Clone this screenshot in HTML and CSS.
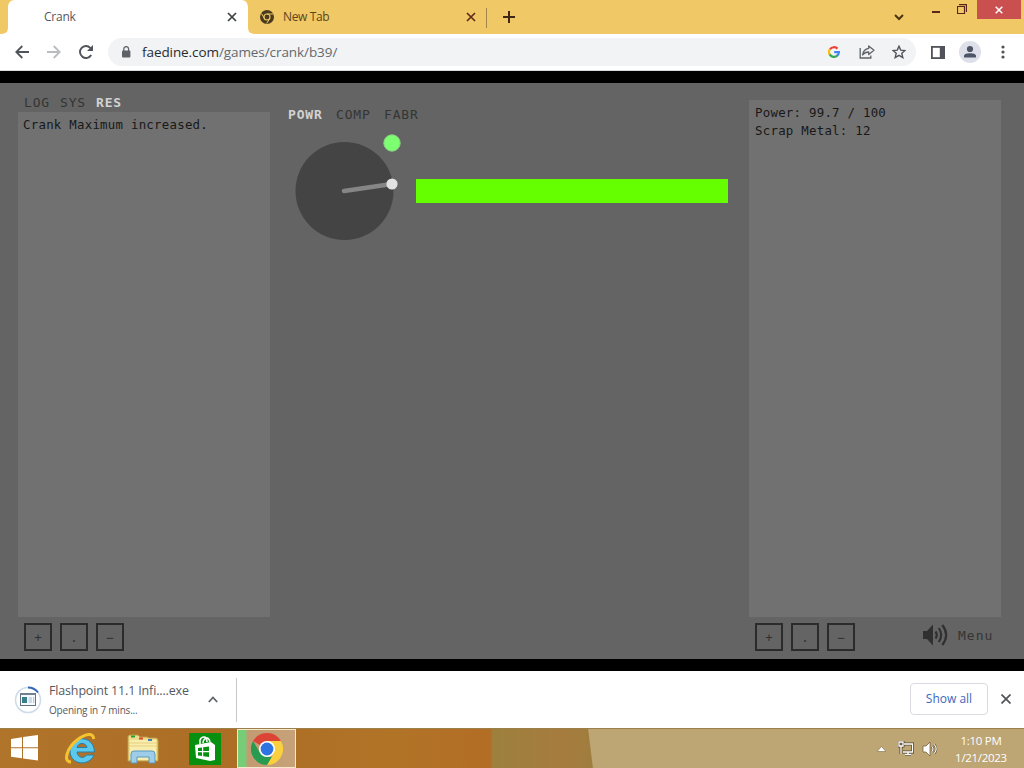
FILE: index.html
```
<!DOCTYPE html>
<html lang="en">
<head>
    <meta charset="utf-8">
    <title>Crank</title>
    <link rel="stylesheet" href="styles.css">
</head>
<body>
    <!-- tab strip -->
    <div class="tab-strip">
        <svg class="tab-shape" width="256" height="34" viewBox="0 0 256 34"><path d="M0 34C6 34 8 32 8 27V8C8 3 10 0 15 0H241C246 0 248 3 248 8V27C248 32 250 34 256 34Z" fill="#fff"/></svg>
        <div class="tab tab-active">
            <span class="tab-title">Crank</span>
            <svg width="10" height="10" viewBox="0 0 10 10"><path d="M1 1L9 9M9 1L1 9" stroke="#3c4043" stroke-width="1.7"/></svg>
        </div>
        <div class="tab tab-second">
            <svg width="14" height="14" viewBox="0 0 14 14"><circle cx="7" cy="7" r="7" fill="#4a3b1e"/><circle cx="7" cy="7" r="3" fill="none" stroke="#f0c966" stroke-width="1.1"/><path d="M7 4H13M4.4 8.5L1.5 3.5M9.6 8.5L6.7 13.5" stroke="#f0c966"/></svg>
            <span class="tab-title">New Tab</span>
            <svg width="10" height="10" viewBox="0 0 10 10"><path d="M1 1L9 9M9 1L1 9" stroke="#5f2d1a" stroke-width="1.7"/></svg>
        </div>
        <div class="tab-divider"></div>
        <svg class="new-tab" width="12" height="12" viewBox="0 0 12 12"><path d="M6 0V12M0 6H12" stroke="#3d2815" stroke-width="2"/></svg>
        <div class="window-buttons">
            <svg class="tab-search" width="10" height="7" viewBox="0 0 10 7"><path d="M1 1L5 5L9 1" fill="none" stroke="#4b3412" stroke-width="2"/></svg>
            <svg class="minimize" width="8" height="2"><rect width="8" height="2" fill="#5b2419"/></svg>
            <svg class="restore" width="10" height="10" viewBox="0 0 10 10"><path d="M.5 2.5H7.5V9.5H.5ZM2 .7H9.5V8" fill="none" stroke="#5b2419" stroke-width="1.2"/></svg>
            <div class="close-button">
                <svg width="8" height="8" viewBox="0 0 8 8"><path d="M.7 .7L7.3 7.3M7.3 .7L.7 7.3" stroke="#fff" stroke-width="1.5"/></svg>
            </div>
        </div>
    </div>

    <!-- toolbar -->
    <div class="toolbar">
        <svg class="nav-icon" width="14" height="14" viewBox="0 0 14 14"><path d="M14 7H1.5M7.3 1L1.3 7L7.3 13" fill="none" stroke="#50545a" stroke-width="1.8"/></svg>
        <svg class="nav-icon" width="14" height="14" viewBox="0 0 14 14"><path d="M0 7H12.5M6.7 1L12.7 7L6.7 13" fill="none" stroke="#babcbe" stroke-width="1.8"/></svg>
        <svg class="nav-icon" width="14" height="14" viewBox="0 0 14 14"><path d="M12.2 10A6 6 0 1 1 11.3 2.8L13 4.5" fill="none" stroke="#50545a" stroke-width="1.9"/><path d="M14 0V6H8Z" fill="#50545a"/></svg>
        <div class="address-bar">
            <svg width="10" height="12" viewBox="0 0 10 12"><rect x="1" y="4.4" width="8.4" height="7.2" rx="1" fill="#5f6368"/><path d="M2.8 5V3A2.4 2.4 0 0 1 7.6 3V5" fill="none" stroke="#5f6368" stroke-width="1.3"/></svg>
            <div class="url"><span class="host">faedine.com</span>/games/crank/b39/</div>
            <svg class="google" width="12" height="12" viewBox="0 0 12 12" fill="none" stroke-width="2.2"><path d="M2 3.4A4.9 4.9 0 0 1 9.5 2.6" stroke="#ea4335"/><path d="M1.8 8.7A4.9 4.9 0 0 1 1.8 3.4" stroke="#fbbc05"/><path d="M9.2 9.7A4.9 4.9 0 0 1 1.7 8.4" stroke="#34a853"/><path d="M6.2 6.2H10.9A4.9 4.9 0 0 1 9 9.8" stroke="#4285f4"/></svg>
            <svg class="share" width="16" height="14" viewBox="0 0 16 14" fill="none" stroke="#5f6368" stroke-width="1.3"><path d="M1.2 3V13H11.8V10.5"/><path d="M9.7 1L15 5.3L9.7 9.5V7C6.6 7 5 8 3.6 10C4 6.5 6 4 9.7 3.4Z" stroke-linejoin="round"/></svg>
            <svg class="star" width="14" height="14" viewBox="0 0 14 14"><path d="M7 1.2L8.7 5.1L13 5.5L9.8 8.3L10.8 12.6L7 10.3L3.2 12.6L4.2 8.3L1 5.5L5.3 5.1Z" fill="none" stroke="#50545a" stroke-width="1.4"/></svg>
        </div>
        <svg class="side-panel" width="14" height="13" viewBox="0 0 14 13"><rect x=".9" y=".9" width="12.2" height="11.2" fill="#fff" stroke="#50545a" stroke-width="1.8"/><rect x="8.8" y="1" width="4.5" height="11" fill="#50545a"/></svg>
        <svg class="avatar" width="22" height="22" viewBox="0 0 22 22"><circle cx="11" cy="11" r="11" fill="#dde0e9"/><circle cx="11" cy="8" r="3.1" fill="#4d5567"/><path d="M5 16.5V15C5 12.8 8 12.2 11 12.2S17 12.8 17 15V16.5Z" fill="#4d5567"/></svg>
        <svg class="kebab" width="4" height="14" viewBox="0 0 4 14" fill="#50545a"><circle cx="2" cy="2" r="1.6"/><circle cx="2" cy="7" r="1.6"/><circle cx="2" cy="12" r="1.6"/></svg>
    </div>

    <!-- game -->
    <div class="game">
        <div class="column">
            <div class="tabs left-tabs"><span>LOG</span><span>SYS</span><span class="selected">RES</span></div>
            <div class="panel log">Crank Maximum increased.</div>
            <div class="controls">
                <div class="control">+</div><div class="control">.</div><div class="control">−</div>
            </div>
        </div>
        <div class="main">
            <div class="tabs main-tabs"><span class="selected">POWR</span><span>COMP</span><span>FABR</span></div>
            <div class="crank-row">
                <svg class="crank" width="116" height="112" viewBox="0 0 116 112">
                    <circle cx="56.5" cy="61" r="49" fill="#444"/>
                    <path d="M56 61L104 54" stroke="#868686" stroke-width="4.5" stroke-linecap="round"/>
                    <circle cx="104" cy="54" r="5.6" fill="#e2e2e2"/>
                    <circle cx="104" cy="13" r="8.2" fill="#7dff72" stroke="#88cf80"/>
                </svg>
                <div class="power-bar"></div>
            </div>
        </div>
        <div class="column">
            <div class="panel resources">
                <div>Power: 99.7 / 100</div>
                <div>Scrap Metal: 12</div>
            </div>
            <div class="controls">
                <div class="control">+</div><div class="control">.</div><div class="control">−</div>
                <svg class="volume" width="26" height="24" viewBox="0 0 26 24"><path d="M1 8H5L11 1.5V22.5L5 16H1Z" fill="#303030"/><path d="M13.5 8.5Q16 12 13.5 15.5M16.8 5Q21.500 12 16.800 19M20.300 2Q28 12 20.300 22" fill="none" stroke="#303030" stroke-width="2.2"/></svg>
                <div class="menu">Menu</div>
            </div>
        </div>
    </div>

    <!-- downloads -->
    <div class="downloads">
        <svg class="file-icon" width="28" height="28" viewBox="0 0 28 28"><circle cx="14" cy="14" r="12.5" fill="none" stroke="#cfdcea" stroke-width="1.6"/><path d="M14 1.5A12.5 12.5 0 0 1 24 6.5" fill="none" stroke="#3568b8" stroke-width="2"/><rect x="6.5" y="7.500" width="15" height="12" fill="#f5faff" stroke="#66727d"/><path d="M6 8H22" stroke="#71808d" stroke-width="2"/><rect x="8" y="11" width="5" height="6" fill="#397f87"/><path d="M14.500 12H18M14.500 14H18M14.500 16H18M19.700 11V17" stroke="#a5bccd"/></svg>
        <div class="download-text">
            <div class="file-name">Flashpoint 11.1 Infi....exe</div>
            <div class="file-status">Opening in 7 mins...</div>
        </div>
        <svg class="chevron" width="10" height="7" viewBox="0 0 10 7"><path d="M.8 6L5 1.5L9.2 6" fill="none" stroke="#5f6368" stroke-width="1.8"/></svg>
        <div class="download-divider"></div>
        <div class="show-all">Show all</div>
        <svg class="dismiss" width="10" height="10" viewBox="0 0 10 10"><path d="M.5 .5L9.5 9.5M9.5 .5L.5 9.5" stroke="#50545a" stroke-width="1.7"/></svg>
    </div>

    <!-- taskbar -->
    <div class="taskbar">
        <svg class="start" width="28" height="26" viewBox="0 0 28 26" fill="#fff"><path d="M0 4L11 2.3V12.3H0ZM12 2.1L27 0V12.3H12ZM0 13.3H11V23.3L0 21.7ZM12 13.3H27V25.5L12 23.5Z"/></svg>
        <svg class="ie" width="32" height="32" viewBox="0 0 32 32">
            <path d="M29.500 19H12C12.500 25 19 26 21.500 22H29C24 34 5 32 5 18C5 2 29 1 29.500 19ZM12 14.500H22C21 9 13 9 12 14.500Z" fill="#5cc8ec" stroke="#2580ab" fill-rule="evenodd"/>
            <path d="M6 29C-3 29 3 14 11.500 7.500C20 .5 29 -1 28.500 6" fill="none" stroke="#f4c430" stroke-width="3"/>
        </svg>
        <svg class="explorer" width="32" height="30" viewBox="0 0 32 30">
            <path d="M1 3Q1 1 3 1H11L13 3H20L22 4H29Q31 4 31 7V27H1Z" fill="#efdc8b" stroke="#b99b44"/>
            <path d="M3 6H29V26H3Z" fill="#f8edaf"/><path d="M2 9H30M2 12H30" stroke="#e5cf79"/>
            <path d="M4 2.5H8" stroke="#259b42" stroke-width="2"/><path d="M12 4.5H16" stroke="#d8492f" stroke-width="2"/><path d="M21 6H25" stroke="#3e80bd" stroke-width="2"/>
            <path d="M4 29V20Q4 17 7 17H25Q28 17 28 20V29H22V23H10V29Z" fill="#9dcde8" stroke="#5999c0"/>
        </svg>
        <svg class="store" width="32" height="32" viewBox="0 0 32 32"><rect width="32" height="32" fill="#079010"/><path d="M6 12L22 9L26 12V27L21 28L7 25Z" fill="#fff"/><path d="M11 11V7Q12 4 15 4Q18 4 18 9M14 10Q14 6 18 5Q20 5 21 9" fill="none" stroke="#fff" stroke-width="1.5"/><path d="M9 15L13 14.5V18H9ZM14.2 14.3L20 13.5V18H14.2ZM9 19.2H13V23L9 22.5ZM14.2 19.2H20V24L14.2 23.2Z" fill="#079010"/></svg>
        <div class="task-active">
            <svg width="32" height="32" viewBox="0 0 32 32">
                <path d="M16 16L2.14 8A16 16 0 0 1 29.86 8Z" fill="#dc4535"/>
                <path d="M16 8H29.86A16 16 0 0 1 16 32L23 20Z" fill="#fbd03f"/>
                <path d="M2.14 8L9 20L16 24H20.700L16 32A16 16 0 0 1 2.14 8Z" fill="#279b50"/>
                <circle cx="16" cy="16" r="8" fill="#fff"/><circle cx="16" cy="16" r="6.4" fill="#2d73e1"/>
            </svg>
        </div>
        <div class="tray">
            <svg class="tray-arrow" width="9" height="6" viewBox="0 0 9 6"><path d="M0 5.5L4.5 .5L9 5.5Z" fill="#fff" stroke="#806c48" stroke-width=".6"/></svg>
            <svg class="network" width="16" height="15" viewBox="0 0 16 15"><path d="M6 3H14.5V11H5M10 11V13.5M7 13.5H13M1 1H5V5H1ZM3 5V13" fill="none" stroke="#544730" stroke-width="3"/><path d="M6 3H14.5V11H5M10 11V13.5M7 13.5H13M1 1H5V5H1ZM3 5V13" fill="none" stroke="#fff" stroke-width="1.3"/></svg>
            <svg class="speaker" width="16" height="16" viewBox="0 0 16 16"><path d="M1 5H4L8 1V15L4 11H1Z" fill="#fff" stroke="#66573c" stroke-width=".7"/><path d="M10 5.5Q12 8 10 10.5M12.3 3.5Q16 8 12.3 12.5" fill="none" stroke="#66573c" stroke-width="2.3"/><path d="M10 5.5Q12 8 10 10.5M12.3 3.5Q16 8 12.3 12.5" fill="none" stroke="#fff" stroke-width="1.1"/></svg>
            <div class="clock"><div>1:10 PM</div><div>1/21/2023</div></div>
        </div>
    </div>
</body>
</html>
```
FILE: styles.css
```
* {
    box-sizing: border-box;
}

body {
    width: 1024px;
    height: 768px;
    margin: 0;
    overflow: hidden;
    font-family: "Open Sans", "Noto Sans", sans-serif;
    background: #fff;
}

svg {
    display: block;
    flex-shrink: 0;
}

.tab-strip {
    display: flex;
    position: relative;
    height: 34px;
    background: #f0c966;
    font-size: 12px;
    color: #5c4520;
}

/* white tab behind the active title */
.tab-shape {
    position: absolute;
    left: 0;
    top: 0;
}

.tab {
    display: flex;
    position: relative;
    align-items: center;
    height: 34px;
}

.tab-active {
    width: 248px;
    padding: 0 11px 0 44px;
    color: #55585c;
}

.tab-second {
    width: 238px;
    padding: 0 10px 0 12px;
}

.tab-second .tab-title {
    margin-left: 9px;
}

.tab-title {
    flex: 1;
    margin-top: -1px;
    letter-spacing: -0.35px;
}

.tab-active .tab-title {
    letter-spacing: -0.25px;
}

.tab-divider {
    width: 1px;
    height: 20px;
    margin-top: 8px;
    background: #a3854a;
}

.new-tab {
    margin: 11px 0 0 16px;
}

.window-buttons {
    display: flex;
    margin-left: auto;
}

.tab-search {
    margin: 14px 28px 0 0;
}

.minimize {
    margin: 11px 17px 0 0;
}

.restore {
    margin: 4px 10px 0 0;
}

.close-button {
    display: flex;
    align-items: center;
    justify-content: center;
    width: 44px;
    height: 19px;
    margin-right: 3px;
    background: #c9504f;
}

.toolbar {
    display: flex;
    align-items: center;
    height: 37px;
    padding-left: 15px;
    border-bottom: 1px solid #d8dadc;
}

.nav-icon {
    margin-right: 18px;
}

.address-bar {
    display: flex;
    align-items: center;
    width: 808px;
    height: 28px;
    margin-left: -3px;
    padding: 0 10px 0 13px;
    border-radius: 14px;
    background: #f1f3f5;
}

.url {
    flex: 1;
    margin-left: 11px;
    font-size: 13.5px;
    letter-spacing: -0.08px;
    color: #65696e;
}

.host {
    color: #292b2e;
}

.share {
    margin-left: 19px;
}

.star {
    margin-left: 17px;
}

.side-panel {
    margin-left: 15px;
}

.avatar {
    margin-left: 14px;
}

.kebab {
    margin-left: 20px;
}

.game {
    display: flex;
    height: 600px;
    padding: 0 23px 0 18px;
    border-top: 12px solid #000;
    border-bottom: 12px solid #000;
    background: #646464;
    font-family: "DejaVu Sans Mono", monospace;
    font-size: 12.4px;
    letter-spacing: 0.25px;
    line-height: 18px;
    color: #181818;
}

.column {
    display: flex;
    flex-direction: column;
    width: 252px;
}

.tabs {
    display: flex;
    font-size: 13px;
    letter-spacing: 0.8px;
    color: #343434;
}

.tabs .selected {
    color: #d2d2d2;
    font-weight: bold;
}

.left-tabs {
    height: 29px;
    padding: 11px 0 0 6px;
}

.left-tabs span {
    width: 36px;
}

.panel {
    background: #717171;
}

.log {
    height: 505px;
    padding: 4px 5px;
}

.resources {
    height: 517px;
    margin-top: 17px;
    padding: 4px 6px;
}

.controls {
    display: flex;
    gap: 8px;
    padding: 6px;
}

.control {
    width: 28px;
    height: 28px;
    border: 2px solid #2b2b2b;
    line-height: 25px;
    text-align: center;
    color: #303030;
}

.volume {
    margin-left: 59px;
}

.menu {
    margin-left: 2px;
    padding-top: 4px;
    font-size: 13px;
    letter-spacing: 1px;
    color: #343434;
}

.main {
    width: 479px;
    padding: 23px 0 0 18px;
}

.main-tabs span {
    width: 48px;
}

.crank-row {
    display: flex;
    align-items: center;
    margin-top: 6px;
}

.power-bar {
    width: 312px;
    height: 24px;
    margin: 9px 0 0 12px;
    background: #6f0;
}

.downloads {
    display: flex;
    align-items: center;
    height: 57px;
    padding-left: 14px;
}

.download-text {
    width: 152px;
    margin: 2px 0 0 7px;
    color: #55595f;
    white-space: nowrap;
}

.file-name {
    font-size: 12.5px;
    line-height: 20px;
    letter-spacing: -0.16px;
}

.file-status {
    font-size: 10px;
    line-height: 19px;
    letter-spacing: -0.2px;
}

.chevron {
    margin-left: 7px;
}

.download-divider {
    width: 1px;
    height: 44px;
    margin-left: 18px;
    background: #c8c8c8;
}

.show-all {
    width: 78px;
    height: 32px;
    margin: -2px 0 0 auto;
    border: 1px solid #d9dbe0;
    border-radius: 4px;
    font-size: 12px;
    line-height: 29px;
    text-align: center;
    color: #3c67bd;
}

.dismiss {
    margin: -2px 13px 0 13px;
}

.taskbar {
    display: flex;
    align-items: center;
    height: 40px;
    border-top: 1px solid #9b804c;
    background: linear-gradient(83deg, transparent 588px, #bda574 589px), linear-gradient(90deg, #b1742b 0, #ac6d25 240px, #b17427 390px, #b36d25 490px, #9d803d 493px, #a67c3e 560px, #9e7e3e 600px);
}

.start {
    margin: -2px 0 0 11px;
}

.ie {
    margin-left: 26px;
}

.explorer {
    margin-left: 30px;
}

.store {
    margin-left: 30px;
}

.task-active {
    display: flex;
    align-items: center;
    justify-content: center;
    width: 59px;
    height: 39px;
    margin-left: 16px;
    border: 1px solid #f5e9ca;
    background: linear-gradient(90deg, #77cc78 7px, #c29b72 10px, #c7a279);
}

.tray {
    display: flex;
    align-items: center;
    margin-left: auto;
    color: #fff;
}

.network {
    margin-left: 12px;
}

.speaker {
    margin-left: 8px;
}

.clock {
    width: 86px;
    font-size: 11.5px;
    line-height: 17px;
    letter-spacing: -0.3px;
    text-align: center;
}
```
